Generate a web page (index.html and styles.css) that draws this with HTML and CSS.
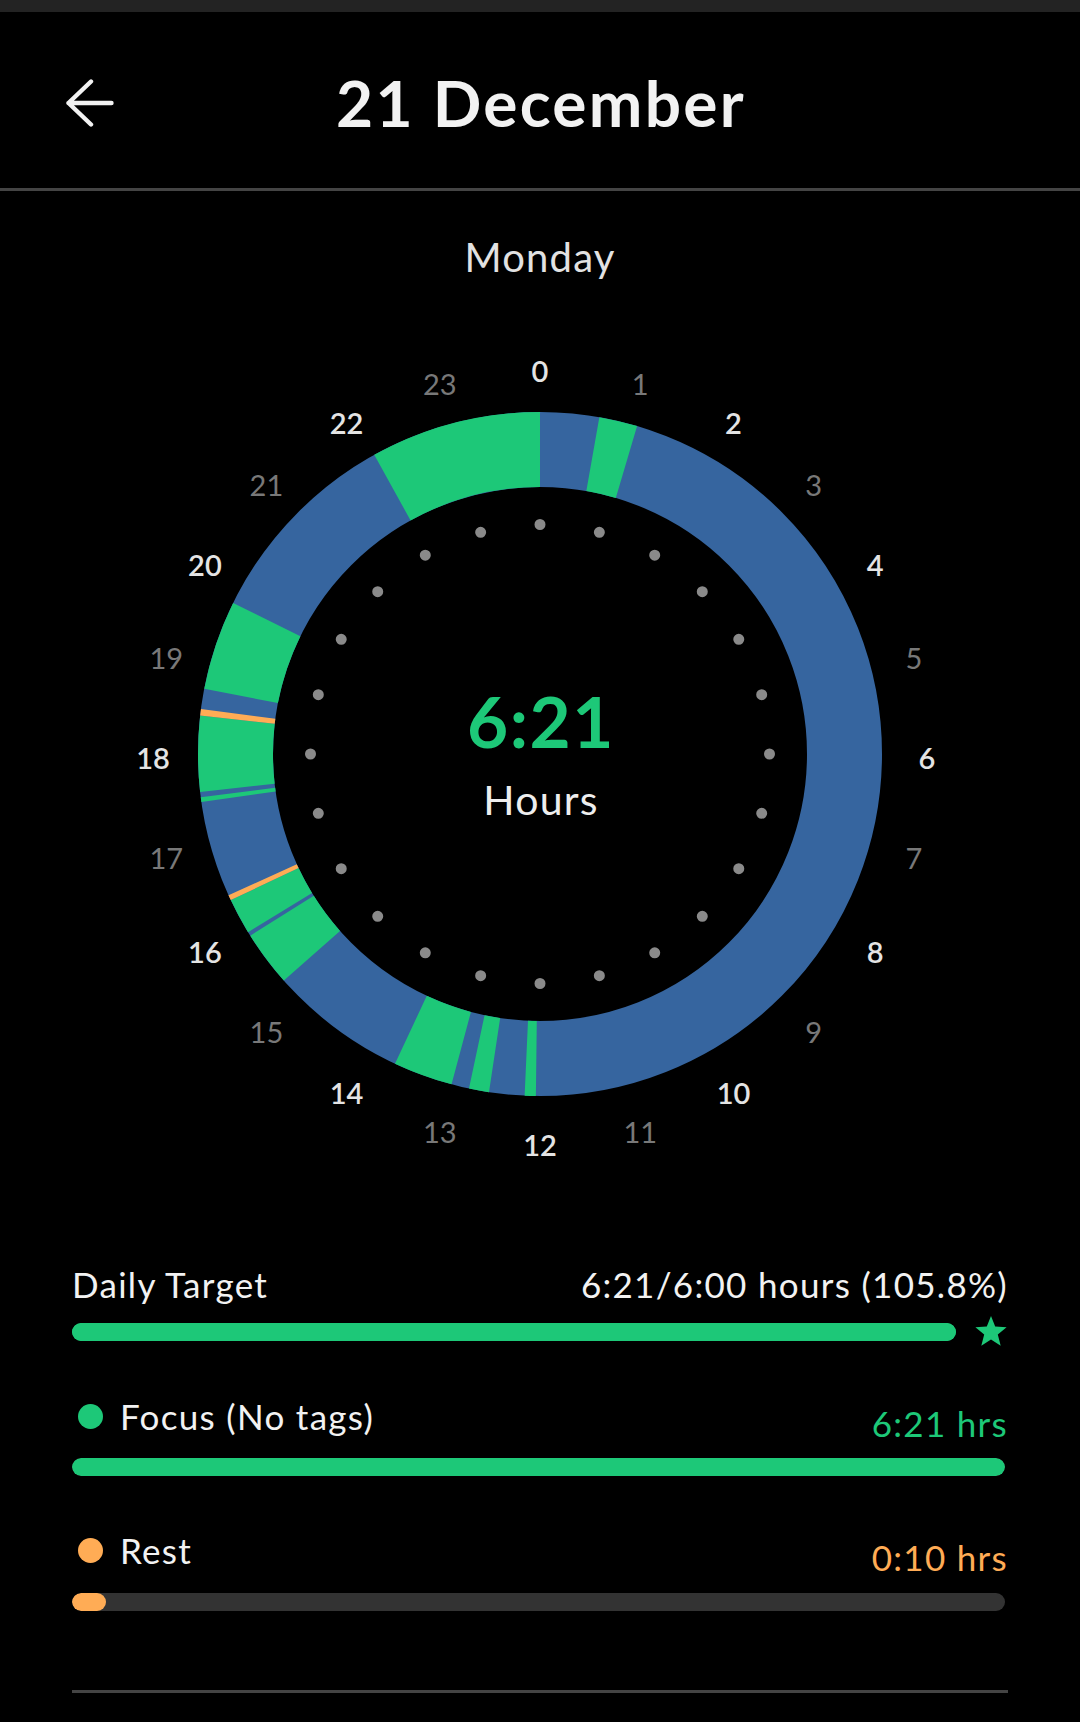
FILE: index.html
```html
<!DOCTYPE html>
<html lang="en">
<head>
<meta charset="utf-8">
<title>21 December</title>
<link rel="stylesheet" href="styles.css">
</head>
<body>
<div class="app">
  <div class="statusbar"></div>
  <header class="header">
    <div class="back">
      <svg class="back-icon" width="48" height="48" viewBox="0 0 48 48">
        <path d="M2.5 24 H45.5 M25 2.5 L2.5 24 L25 45.5" />
      </svg>
    </div>
    <h1 class="title">21 December</h1>
    <div></div>
  </header>
  <div class="divider-full"></div>

  <div class="weekday">Monday</div>

  <svg class="clock" width="1080" height="900" viewBox="0 0 1080 900">
    <circle class="ring ring-blue" cx="540" cy="454" r="304.5" />
    <g transform="rotate(-90 540 454)">
      <circle class="ring ring-green" cx="540" cy="454" r="304.5" pathLength="360" stroke-dasharray="6.5 353.5" stroke-dashoffset="-10" />
      <circle class="ring ring-green" cx="540" cy="454" r="304.5" pathLength="360" stroke-dasharray="1.9 358.1" stroke-dashoffset="-180.7" />
      <circle class="ring ring-green" cx="540" cy="454" r="304.5" pathLength="360" stroke-dasharray="3.4 356.6" stroke-dashoffset="-188.6" />
      <circle class="ring ring-green" cx="540" cy="454" r="304.5" pathLength="360" stroke-dasharray="10.1 349.9" stroke-dashoffset="-195" />
      <circle class="ring ring-green" cx="540" cy="454" r="304.5" pathLength="360" stroke-dasharray="9.4 350.6" stroke-dashoffset="-228.5" />
      <circle class="ring ring-green" cx="540" cy="454" r="304.5" pathLength="360" stroke-dasharray="6.1 353.9" stroke-dashoffset="-238.6" />
      <circle class="ring ring-green" cx="540" cy="454" r="304.5" pathLength="360" stroke-dasharray="0.8 359.2" stroke-dashoffset="-261.9" />
      <circle class="ring ring-green" cx="540" cy="454" r="304.5" pathLength="360" stroke-dasharray="12.9 347.1" stroke-dashoffset="-263.6" />
      <circle class="ring ring-green" cx="540" cy="454" r="304.5" pathLength="360" stroke-dasharray="15.2 344.8" stroke-dashoffset="-281" />
      <circle class="ring ring-green" cx="540" cy="454" r="304.5" pathLength="360" stroke-dasharray="29 331" stroke-dashoffset="-331" />
      <circle class="ring ring-orange" cx="540" cy="454" r="304.5" pathLength="360" stroke-dasharray="0.9 359.1" stroke-dashoffset="-244.7" />
      <circle class="ring ring-orange" cx="540" cy="454" r="304.5" pathLength="360" stroke-dasharray="1.1 358.9" stroke-dashoffset="-276.5" />
    </g>
    <circle class="ticks" cx="540" cy="454" r="229.5" pathLength="360" stroke-dasharray="0 15" />

    <g class="hours">
      <text class="h-major" x="540" y="82.1">0</text>
      <text class="h-minor" x="640.2" y="95.3">1</text>
      <text class="h-major" x="733.5" y="134">2</text>
      <text class="h-minor" x="813.6" y="195.5">3</text>
      <text class="h-major" x="875.1" y="275.6">4</text>
      <text class="h-minor" x="913.8" y="368.9">5</text>
      <text class="h-major" x="927" y="469.1">6</text>
      <text class="h-minor" x="913.8" y="569.3">7</text>
      <text class="h-major" x="875.1" y="662.6">8</text>
      <text class="h-minor" x="813.6" y="742.7">9</text>
      <text class="h-major" x="733.5" y="804.2">10</text>
      <text class="h-minor" x="640.2" y="842.9">11</text>
      <text class="h-major" x="540" y="856.1">12</text>
      <text class="h-minor" x="439.8" y="842.9">13</text>
      <text class="h-major" x="346.5" y="804.2">14</text>
      <text class="h-minor" x="266.4" y="742.7">15</text>
      <text class="h-major" x="204.9" y="662.6">16</text>
      <text class="h-minor" x="166.2" y="569.3">17</text>
      <text class="h-major" x="153" y="469.1">18</text>
      <text class="h-minor" x="166.2" y="368.9">19</text>
      <text class="h-major" x="204.9" y="275.6">20</text>
      <text class="h-minor" x="266.4" y="195.5">21</text>
      <text class="h-major" x="346.5" y="134">22</text>
      <text class="h-minor" x="439.8" y="95.3">23</text>
    </g>

    <text class="total" x="541" y="448">6:21</text>
    <text class="total-unit" x="541" y="515">Hours</text>
  </svg>

  <section class="stats">
    <div class="row">
      <span class="label">Daily Target</span>
      <span class="value-plain">6:21/6:00 hours (105.8%)</span>
    </div>
    <div class="target-line">
      <div class="bar bar-target"><div class="fill fill-green" style="width:100%"></div></div>
      <svg class="star" width="34" height="33" viewBox="0 0 34 33">
        <path d="M17 1 L21.2 11.6 L32.6 12.3 L23.8 19.6 L26.7 30.7 L17 24.5 L7.3 30.7 L10.2 19.6 L1.4 12.3 L12.8 11.6 Z" />
      </svg>
    </div>

    <div class="row row-item row-focus">
      <span class="label"><span class="dot dot-green"></span>Focus (No tags)</span>
      <span class="value value-green">6:21 hrs</span>
    </div>
    <div class="bar"><div class="fill fill-green" style="width:100%"></div></div>

    <div class="row row-item row-rest">
      <span class="label"><span class="dot dot-orange"></span>Rest</span>
      <span class="value value-orange">0:10 hrs</span>
    </div>
    <div class="bar"><div class="fill fill-orange" style="width:3.6%"></div></div>

    <div class="divider-bottom"></div>
  </section>
</div>
</body>
</html>
```

FILE: styles.css
```css
* { box-sizing: border-box; }

html, body {
  margin: 0;
  padding: 0;
  background: #000;
}

body {
  font-family: "Lato", "Noto Sans", sans-serif;
  color: #f0f0f0;
}

.app {
  width: 1080px;
  min-height: 1722px;
  background: #000;
}

.statusbar {
  height: 12px;
  background: #232323;
}

.header {
  height: 176px;
  padding-top: 6px;
  display: grid;
  grid-template-columns: 1fr auto 1fr;
  align-items: center;
}

.back {
  padding-left: 66px;
  display: flex;
  align-items: center;
}

.back-icon {
  display: block;
}

.back-icon path {
  fill: none;
  stroke: #f2f2f2;
  stroke-width: 4.4;
  stroke-linecap: round;
  stroke-linejoin: round;
}

.title {
  margin: 0 0 0 2px;
  font-size: 64px;
  line-height: 76px;
  font-weight: 700;
  color: #f2f2f2;
  letter-spacing: 2.3px;
}

.divider-full {
  height: 3px;
  background: #444;
}

.weekday {
  margin-top: 43px;
  text-align: center;
  font-size: 40px;
  line-height: 47px;
  color: #e2e2e2;
  letter-spacing: 1.2px;
}

.clock {
  display: block;
  margin-top: 19px;
}

.ring {
  fill: none;
  stroke-width: 75;
}

.ring-blue { stroke: #36659f; }
.ring-green { stroke: #1dc878; }
.ring-orange { stroke: #ffac55; }

.ticks {
  fill: none;
  stroke: #8a8a8a;
  stroke-width: 11;
  stroke-linecap: round;
}

.hours text {
  font-family: "Lato", "Noto Sans", sans-serif;
  font-size: 29px;
  text-anchor: middle;
}

.h-major {
  fill: #e4e4e4;
  font-weight: 600;
}

.h-minor {
  fill: #787878;
  font-weight: 400;
}

.total {
  font-family: "Lato", "Noto Sans", sans-serif;
  font-size: 71px;
  font-weight: 700;
  fill: #1dc878;
  text-anchor: middle;
  letter-spacing: 1.5px;
}

.total-unit {
  font-family: "Lato", "Noto Sans", sans-serif;
  font-size: 41px;
  font-weight: 400;
  fill: #eeeeee;
  text-anchor: middle;
  letter-spacing: 1.2px;
}

.stats {
  padding: 0 72px 0 72px;
  margin-top: 64px;
}

.row {
  display: flex;
  justify-content: space-between;
  align-items: flex-start;
  font-size: 35px;
  line-height: 40px;
  letter-spacing: 1.3px;
}

.label {
  display: flex;
  align-items: center;
  color: #f2f2f2;
}

.value-plain {
  color: #f2f2f2;
}

.value {
  padding-top: 7px;
}

.value-green { color: #1dc878; }
.value-orange { color: #ffac55; }

.dot {
  width: 25px;
  height: 25px;
  border-radius: 50%;
  margin-left: 6px;
  margin-right: 17px;
  flex: none;
}

.dot-green { background: #1dc878; }
.dot-orange { background: #ffac55; }

.target-line {
  margin-top: 11px;
  display: flex;
  align-items: center;
  gap: 18px;
}

.target-line .bar {
  flex: 1;
}

.star {
  display: block;
  flex: none;
}

.star path {
  fill: #1dc878;
}

.bar {
  height: 18px;
  border-radius: 9px;
  background: #333;
  overflow: hidden;
  margin-right: 3px;
}

.bar-target {
  margin-right: 0;
  background: #1dc878;
}

.fill {
  height: 100%;
  border-radius: 9px;
}

.fill-green { background: #1dc878; }
.fill-orange { background: #ffac55; }

.row-focus {
  margin-top: 48px;
}

.row-rest {
  margin-top: 54px;
}

.row-item + .bar {
  margin-top: 15px;
}

.row-rest + .bar {
  margin-top: 16px;
}

.divider-bottom {
  margin-top: 79px;
  height: 3px;
  background: #444;
}
```
